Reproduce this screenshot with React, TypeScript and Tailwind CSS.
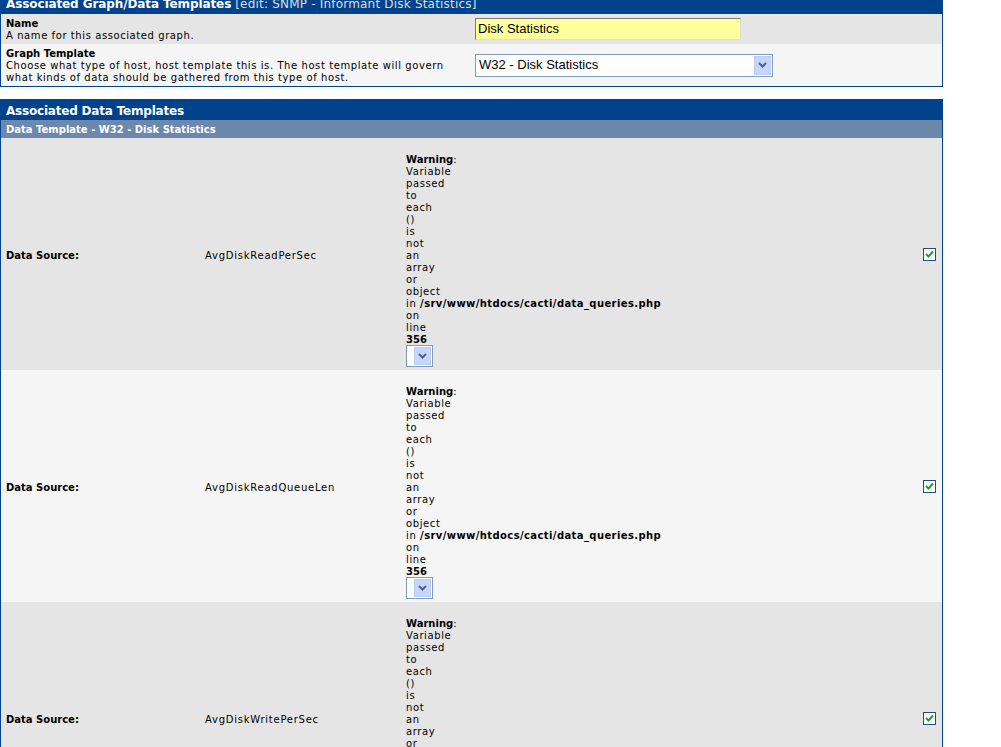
import React from 'react';

const rows = [
  { name: 'AvgDiskReadPerSec', bg: 'bg-[#E5E5E5]' },
  { name: 'AvgDiskReadQueueLen', bg: 'bg-[#F5F5F5]' },
  { name: 'AvgDiskWritePerSec', bg: 'bg-[#E5E5E5]' },
];

// one word per line, the way the narrow cell breaks the php warning
const words = ['Variable', 'passed', 'to', 'each', '()', 'is', 'not', 'an', 'array', 'or', 'object'];

function Chevron() {
  return (
    <svg width="9" height="6" viewBox="0 0 9 6">
      <path d="M1 1 L4.5 4.5 L8 1" fill="none" stroke="#4d6185" strokeWidth="2" />
    </svg>
  );
}

function DropButton() {
  return (
    <div className="flex h-full w-[17px] items-center justify-center border border-[#bccdf3] bg-[#c6d6fa]">
      <Chevron />
    </div>
  );
}

function Checkbox() {
  return (
    <div className="flex h-[13px] w-[13px] items-center justify-center border border-[#1c5180] bg-white">
      <svg width="9" height="8" viewBox="0 0 9 8">
        <path d="M1 4 L3.5 6.5 L8 1.5" fill="none" stroke="#21a121" strokeWidth="2" />
      </svg>
    </div>
  );
}

function Warning() {
  return (
    <div className="pt-[1px] leading-[12px] tracking-[0.6px]">
      <div className="h-[12px]" />
      <div>
        <b className="tracking-normal">Warning</b>:
      </div>
      {words.map((w, i) => (
        <div key={i}>{w}</div>
      ))}
      <div className="whitespace-nowrap">
        in <b className="tracking-[0.4px]">/srv/www/htdocs/cacti/data_queries.php</b>
      </div>
      <div>on</div>
      <div>line</div>
      <div className="font-bold tracking-normal">356</div>
      <div className="-mt-[1px] flex h-[22px] w-[27px] justify-end border border-[#7f9db9] bg-white p-[1px]">
        <DropButton />
      </div>
    </div>
  );
}

export default function App() {
  return (
    <div className="min-h-[747px] overflow-hidden bg-white font-['DejaVu_Sans',Verdana,sans-serif] text-[10px] text-black">
      {/* Associated Graph/Data Templates */}
      <div className="-mt-[7px] w-[943px] border border-[#00438C]">
        <div className="flex h-[20px] items-center bg-[#00438C] pl-[5px] text-[12px] leading-[14px] text-white">
          <span className="font-bold tracking-[-0.1px]">Associated Graph/Data Templates</span>
          <span className="ml-[4px] tracking-[0.2px] text-[#dcdcdc]">[edit: SNMP - Informant Disk Statistics]</span>
        </div>
        <div className="flex items-center bg-[#E5E5E5] leading-[12px]">
          <div className="w-[471px] shrink-0 pb-[2px] pl-[5px] pt-[4px]">
            <div className="font-bold">Name</div>
            <div className="tracking-[0.58px]">A name for this associated graph.</div>
          </div>
          <div className="pl-[3px]">
            <div className="flex h-[22px] w-[266px] items-center border border-t-[#7a7a7a] border-l-[#7a7a7a] border-r-[#dcdcdc] border-b-[#dcdcdc] bg-[#ffff9c] pl-[2px] font-['Liberation_Sans',Arial,sans-serif] text-[13px]">
              Disk Statistics
            </div>
          </div>
        </div>
        <div className="flex items-center bg-[#F5F5F5] leading-[12px]">
          <div className="w-[471px] shrink-0 pb-[2px] pl-[5px] pt-[4px]">
            <div className="font-bold">Graph Template</div>
            <div className="tracking-[0.58px]">
              Choose what type of host, host template this is. The host template will govern
              <br />
              what kinds of data should be gathered from this type of host.
            </div>
          </div>
          <div className="pl-[3px]">
            <div className="flex h-[23px] w-[298px] items-center border border-[#7f9db9] bg-white p-[1px]">
              <span className="flex-1 pl-[2px] font-['Liberation_Sans',Arial,sans-serif] text-[13px]">W32 - Disk Statistics</span>
              <DropButton />
            </div>
          </div>
        </div>
      </div>

      {/* Associated Data Templates */}
      <div className="mt-[12px] w-[943px] border border-b-0 border-[#00438C]">
        <div className="flex h-[20px] items-center bg-[#00438C] pl-[5px] pt-[1px] text-[12px] font-bold leading-[14px] tracking-[-0.2px] text-white">
          Associated Data Templates
        </div>
        <div className="flex h-[18px] items-center bg-[#6d88ad] pl-[5px] pt-[1px] font-bold leading-[12px] text-white">
          Data Template - W32 - Disk Statistics
        </div>
        {rows.map((r) => (
          <div key={r.name} className={`flex items-center ${r.bg}`}>
            <div className="w-[201px] shrink-0 pl-[5px] pt-[2px] font-bold">Data Source:</div>
            <div className="w-[201px] shrink-0 pl-[3px] pt-[2px] tracking-[0.75px]">{r.name}</div>
            <div className="flex-1 px-[3px] py-[3px]">
              <Warning />
            </div>
            <div className="pr-[6px]">
              <Checkbox />
            </div>
          </div>
        ))}
      </div>
    </div>
  );
}
